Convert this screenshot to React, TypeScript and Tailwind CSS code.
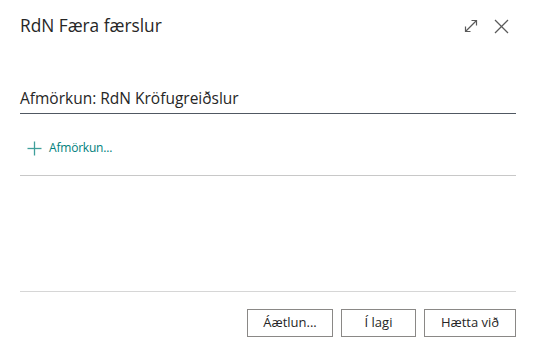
import React from 'react';

const ExpandIcon = () => (
  <svg width="14" height="14" viewBox="0 0 14 14" fill="none" stroke="#5a5a5a" strokeWidth="1.2">
    <path d="M1.5 12.5 L12.5 1.5" />
    <path d="M7.5 1.5 H12.5 V6.5" />
    <path d="M1.5 7.5 V12.5 H6.5" />
  </svg>
);

const CloseIcon = () => (
  <svg width="15" height="15" viewBox="0 0 15 15" fill="none" stroke="#5a5a5a" strokeWidth="1.3">
    <path d="M1 1 L14 14" />
    <path d="M14 1 L1 14" />
  </svg>
);

const PlusIcon = () => (
  <svg width="15" height="15" viewBox="0 0 15 15" fill="none" stroke="#3f9f9b" strokeWidth="1.3">
    <path d="M7.5 0.5 V14.5" />
    <path d="M0.5 7.5 H14.5" />
  </svg>
);

const App = () => {
  const buttons = [
    { label: 'Áætlun...', w: 'w-[86px]' },
    { label: 'Í lagi', w: 'w-[75px]' },
    { label: 'Hætta við', w: 'w-[92px]' },
  ];

  return (
    <div
      className="w-[538px] h-[360px] bg-white flex flex-col pl-5 pr-[22px] text-[#262626]"
      style={{ fontFamily: '"Open Sans", "Noto Sans", sans-serif' }}
    >
      <div className="flex items-center justify-between mt-[15px] h-[22px]">
        <h1 className="text-[17.3px] leading-[22px]">RdN Færa færslur</h1>
        <div className="flex items-center gap-[16px] mr-[7px]">
          <ExpandIcon />
          <CloseIcon />
        </div>
      </div>

      <h2 className="mt-[51px] text-[15.5px] leading-[20px] pb-[5px] border-b border-[#505862]">
        Afmörkun: RdN Kröfugreiðslur
      </h2>

      <div className="flex items-center h-[20px] mt-[24px] pl-[7px] gap-[7px]">
        <PlusIcon />
        <span className="text-[12px] text-[#00807c] tracking-[-0.2px]">Afmörkun...</span>
      </div>

      <div className="h-px bg-[#c8c8c8] mt-[17px]" />

      <div className="h-px bg-[#d6d6d6] mt-[115px]" />

      <div className="flex justify-end gap-[8px] mt-[17px]">
        {buttons.map((b) => (
          <button
            key={b.label}
            className={`${b.w} h-[28px] border border-[#8a8886] bg-white text-[13px] text-[#262626] flex items-center justify-center`}
          >
            {b.label}
          </button>
        ))}
      </div>
    </div>
  );
};

export default App;
